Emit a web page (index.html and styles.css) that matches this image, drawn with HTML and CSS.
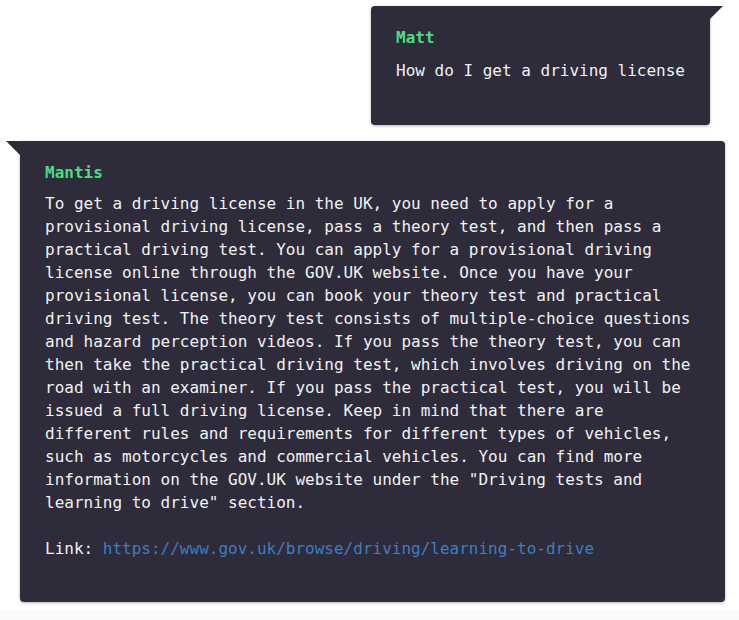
FILE: index.html
```html
<!DOCTYPE html>
<html>
<head>
<meta charset="utf-8">
<link rel="stylesheet" href="styles.css">
</head>
<body>
<div class="chat">
  <div class="msg msg-user">
    <div class="name">Matt</div>
    <p class="text">How do I get a driving license</p>
  </div>
  <div class="msg msg-bot">
    <div class="name">Mantis</div>
    <p class="text">To get a driving license in the UK, you need to apply for a provisional driving license, pass a theory test, and then pass a practical driving test. You can apply for a provisional driving license online through the GOV.UK website. Once you have your provisional license, you can book your theory test and practical driving test. The theory test consists of multiple-choice questions and hazard perception videos. If you pass the theory test, you can then take the practical driving test, which involves driving on the road with an examiner. If you pass the practical test, you will be issued a full driving license. Keep in mind that there are different rules and requirements for different types of vehicles, such as motorcycles and commercial vehicles. You can find more information on the GOV.UK website under the "Driving tests and learning to drive" section.</p>
    <p class="text">Link: <a class="link" href="#">https://www.gov.uk/browse/driving/learning-to-drive</a></p>
  </div>
</div>
<div class="footer"></div>
</body>
</html>
```
FILE: styles.css
```css
html, body {
  margin: 0;
  padding: 0;
  background: #ffffff;
}
body {
  font-family: "DejaVu Sans Mono", monospace;
  font-size: 16px;
  line-height: 23px;
  color: #f2f2f2;
}
.chat {
  display: flex;
  flex-direction: column;
  gap: 16px;
  padding: 6px 14px 0 6px;
}
.msg {
  position: relative;
  background: #2e2b3b;
  border-radius: 4px;
  padding: 20px 25px 20px 25px;
  box-shadow: 0 1px 3px rgba(0, 0, 0, 0.3);
}
.msg-user {
  align-self: flex-end;
  margin-right: 15px;
  border-top-right-radius: 0;
}
.msg-user::before {
  content: "";
  position: absolute;
  top: 0;
  right: -13px;
  border-top: 13px solid #2e2b3b;
  border-right: 13px solid transparent;
}
.msg-bot {
  margin-left: 14px;
  padding-right: 28px;
  padding-bottom: 19px;
  border-top-left-radius: 0;
}
.msg-bot::before {
  content: "";
  position: absolute;
  top: 0;
  left: -14px;
  border-top: 14px solid #2e2b3b;
  border-left: 14px solid transparent;
}
.name {
  color: #4ade80;
  font-weight: bold;
  margin-bottom: 10px;
}
.msg-bot .name {
  margin-bottom: 8px;
}
.text {
  margin: 0 0 23px 0;
}
.link {
  color: #3b7fc4;
  text-decoration: none;
}
.footer {
  margin-top: 8px;
  height: 20px;
  background: #fafafa;
}
```
